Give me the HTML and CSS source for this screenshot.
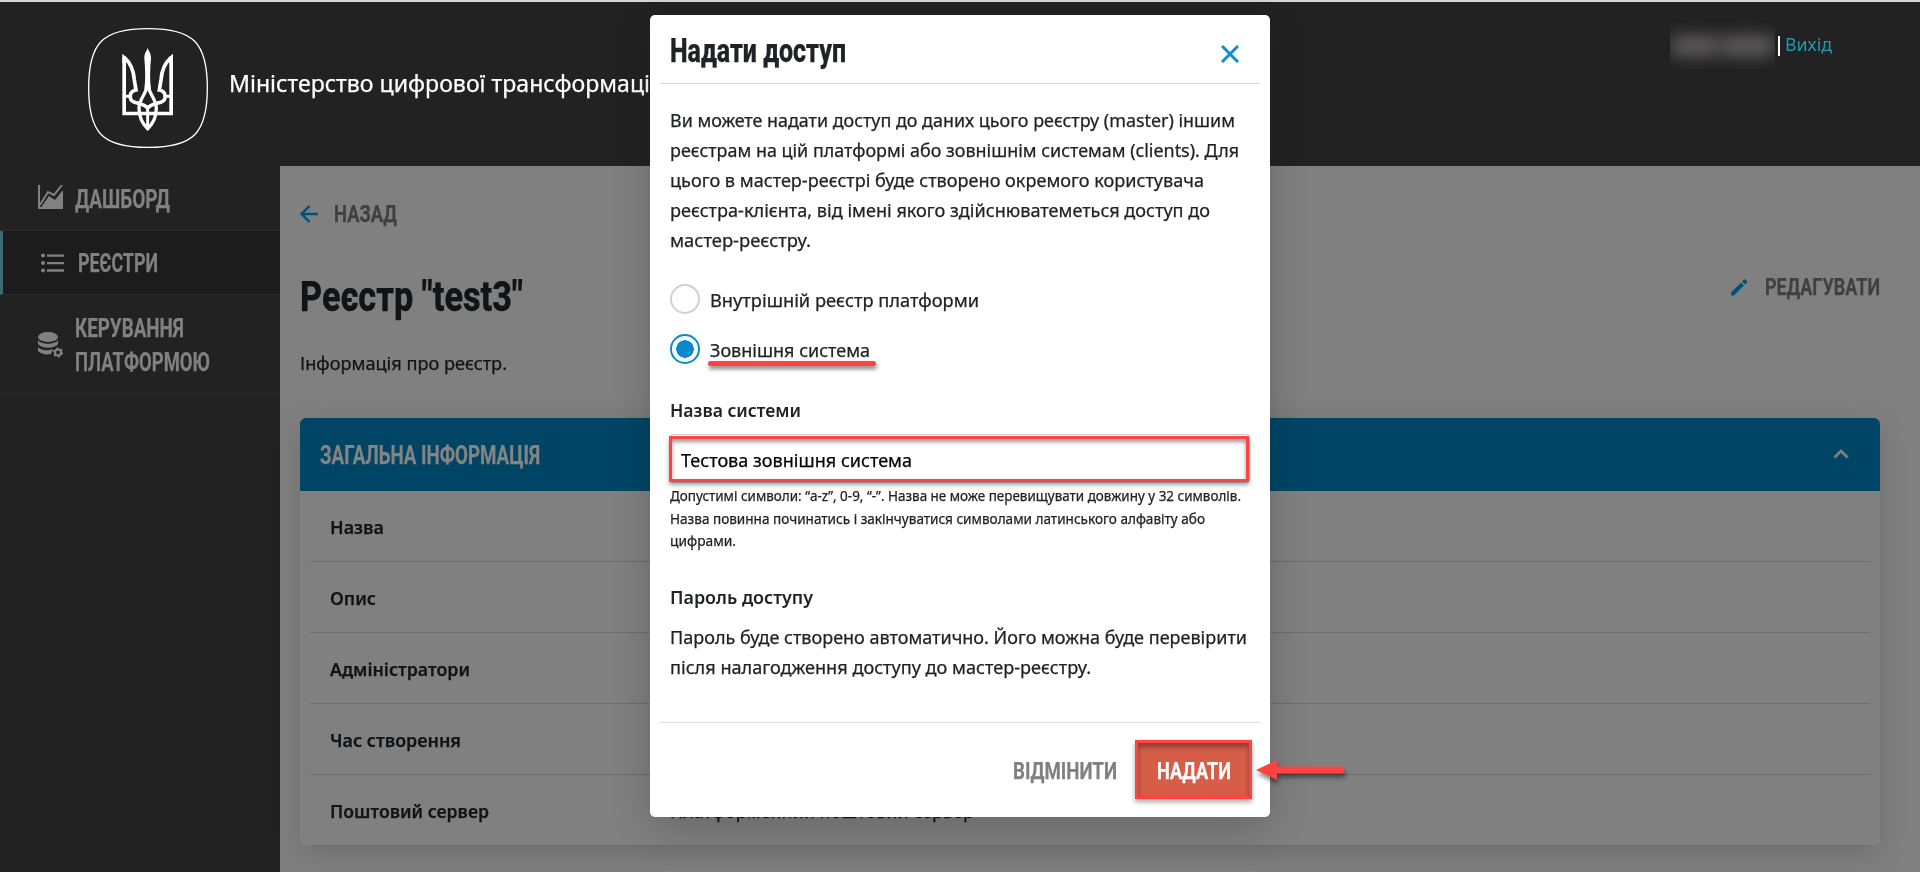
FILE: index.html
```html
<!DOCTYPE html>
<html lang="uk">
<head>
<meta charset="utf-8">
<title>Реєстр "test3"</title>
<link rel="stylesheet" href="styles.css">
</head>
<body>
<div class="page">
  <header class="header">
    <svg class="logo" viewBox="24 24 360 360" fill="none" stroke="#fff">
      <path stroke-width="4" d="M204 26C340 26 382 68 382 204S340 382 204 382S26 340 26 204S68 26 204 26Z"/>
      <g stroke-width="11">
        <path d="M132.500 112V280.500H273.500V112"/>
        <path d="M132 112C154 130 161 152 163 180L168 210C146 214 146 240 162 246C178 251 194 253 203 264C212 253 228 251 244 246C260 240 260 214 238 210L243 180C245 152 252 130 274 112"/>
        <path d="M132 229H152M254 229H274" stroke-width="9"/>
        <path d="M203 190C200 222 178 235 177 264C177 293 190 314 203 326C216 314 229 293 229 264C228 235 206 222 203 190" stroke-width="10"/>
        <path d="M203 262V326" stroke-width="9"/>
      </g>
      <path fill="#fff" stroke="none" d="M127 101L142 114L138 130H127ZM279 101L264 114L268 130H279ZM203 84C207 95 213 99 213 115C210 150 209 178 213 208H193C197 178 196 150 193 115C193 99 199 95 203 84Z"/>
    </svg>
    <div class="ministry"><span class="fit" data-w="421">Міністерство цифрової трансформаці</span></div>
    <div class="account"><span class="user"><i></i><i></i></span><span class="bar"></span><a class="logout"><span class="fit" data-w="47">Вихід</span></a></div>
  </header>
  <div class="layout">
    <nav class="sidebar">
      <a class="item"><svg width="25" height="24" viewBox="0 0 25 24"><path fill="none" stroke="#818181" stroke-width="2" d="M1 0V23M2 20L10 7L16 10L24 0"/><path fill="#818181" d="M2 24L11 11L17 15L25 5V24ZM0 22H25V24H0Z"/></svg><span class="fit" data-w="95">ДАШБОРД</span></a>
      <a class="item active"><svg width="23" height="20" viewBox="0 0 23 20" fill="#818181"><circle cx="2" cy="2.5" r="2"/><circle cx="2" cy="10" r="2"/><circle cx="2" cy="17.5" r="2"/><path d="M6 1.4h17v2.4H6zM6 8.9h17v2.4H6zM6 16.3h17v2.4H6z"/></svg><span class="fit" data-w="80">РЕЄСТРИ</span></a>
      <a class="item tall"><svg width="26" height="26" viewBox="0 0 26 26"><ellipse cx="10" cy="5" rx="10" ry="5" fill="#818181"/><path fill="#818181" d="M0 8C3 13 17 13 20 8V12C16 17 4 17 0 12ZM0 15C3 19 10 19 15 17L13 22C8 23 3 22 0 19Z"/><circle cx="20" cy="20.5" r="3" fill="none" stroke="#818181" stroke-width="2.2"/><circle cx="20" cy="20.5" r="4.2" fill="none" stroke="#818181" stroke-width="1.8" stroke-dasharray="2.2"/></svg><span class="lines"><span class="fit" data-w="109">КЕРУВАННЯ</span><span class="fit" data-w="135">ПЛАТФОРМОЮ</span></span></a>
    </nav>
    <main class="main">
      <a class="back"><svg width="18" height="18" viewBox="0 0 18 18"><path d="M18 9H2M9.500 1L1.500 9L9.500 17" fill="none" stroke="#00517a" stroke-width="2.4"/></svg><span class="fit" data-w="63">НАЗАД</span></a>
      <div class="heading"><h1><span class="fit" data-w="223">Реєстр "test3"</span></h1>
        <a class="edit"><svg width="17" height="17" viewBox="0 0 17 17" fill="#00517a"><path d="M0 13.500L10 3.500L13 6.500L3 16.500H0ZM11 2.500L13 .6Q13.800 0 14.500 .6L16 2.200Q16.600 3 16 3.600L14 5.600Z"/></svg><span class="fit" data-w="115">РЕДАГУВАТИ</span></a></div>
      <p class="info"><span class="fit" data-w="207">Інформація про реєстр.</span></p>
      <section class="card">
        <div class="card-head"><span class="fit" data-w="220">ЗАГАЛЬНА ІНФОРМАЦІЯ</span><svg width="16" height="10" viewBox="0 0 16 10"><path d="M1.500 8.500L8 2L14.500 8.500" fill="none" stroke="#808080" stroke-width="2.8"/></svg></div>
        <div class="row"><b><span class="fit" data-w="54">Назва</span></b></div>
        <div class="row"><b><span class="fit" data-w="46">Опис</span></b></div>
        <div class="row"><b><span class="fit" data-w="140">Адміністратори</span></b></div>
        <div class="row"><b><span class="fit" data-w="131">Час створення</span></b></div>
        <div class="row"><b><span class="fit" data-w="159">Поштовий сервер</span></b><span class="fit" data-w="304">Платформенний поштовий сервер</span></div>
      </section>
    </main>
  </div>
</div>

<div class="modal">
  <div class="modal-head"><h2><span class="fit" data-w="176">Надати доступ</span></h2>
    <svg width="18" height="18" viewBox="0 0 18 18"><path d="M1 1L17 17M17 1L1 17" stroke="#0f8fd2" stroke-width="3"/></svg></div>
  <div class="modal-body">
    <p class="lines"><span class="fit" data-w="565">Ви можете надати доступ до даних цього реєстру (master) іншим</span><span class="fit" data-w="569">реєстрам на цій платформі або зовнішнім системам (clients). Для</span><span class="fit" data-w="534">цього в мастер-реєстрі буде створено окремого користувача</span><span class="fit" data-w="540">реєстра-клієнта, від імені якого здійснюватеметься доступ до</span><span class="fit" data-w="141">мастер-реєстру.</span></p>
    <div class="radios">
      <label class="radio"><i></i><span class="fit" data-w="269">Внутрішній реєстр платформи</span></label>
      <label class="radio checked"><i></i><span class="fit" data-w="160">Зовнішня система</span><em class="underline"></em></label>
    </div>
    <div class="label first"><span class="fit" data-w="131">Назва системи</span></div>
    <div class="input"><span class="fit" data-w="231">Тестова зовнішня система</span><em class="input-mark"></em></div>
    <div class="hint lines"><span class="fit" data-w="571">Допустимі символи: “a-z”, 0-9, “-”. Назва не може перевищувати довжину у 32 символів.</span><span class="fit" data-w="535">Назва повинна починатись і закінчуватися символами латинського алфавіту або</span><span class="fit" data-w="66">цифрами.</span></div>
    <div class="label second"><span class="fit" data-w="143">Пароль доступу</span></div>
    <div class="lines note"><span class="fit" data-w="577">Пароль буде створено автоматично. Його можна буде перевірити</span><span class="fit" data-w="421">після налагодження доступу до мастер-реєстру.</span></div>
  </div>
  <div class="modal-foot"><a class="cancel"><span class="fit" data-w="104">ВІДМІНИТИ</span></a><a class="grant"><span class="fit" data-w="74">НАДАТИ</span></a></div>
  <svg class="arrow" width="92" height="24" viewBox="0 0 92 24"><path d="M20 12H85" stroke="#ff4343" stroke-width="7" stroke-linecap="round"/><path d="M0 12L21 2V22Z" fill="#ff4343"/></svg>
</div>
<script src="fit.js"></script>
</body>
</html>
```
FILE: styles.css
```css
* { box-sizing: border-box; }
body { margin: 0; background: #808080; color: #111315; font: 18.4px/30px "Noto Sans", "Open Sans", sans-serif; -webkit-text-stroke: .25px currentColor; overflow: hidden; }
h1, h2, p { margin: 0; }
.fit { display: inline-block; white-space: nowrap; transform-origin: 0 50%; }
.lines { display: flex; flex-direction: column; align-items: flex-start; }
svg { flex: none; display: block; }

.page { display: flex; flex-direction: column; height: 872px; border-top: 2px solid #d5d9da; overflow: hidden; }
.header { display: flex; align-items: flex-start; height: 164px; flex: none; background: #222; padding: 26px 87px 0 88px; }
.logo { width: 120px; height: 120px; }
.ministry { margin: 40px 0 0 21px; color: #fff; font-size: 23px; line-height: 30px; white-space: nowrap; }
.account { display: flex; margin-left: auto; margin-top: -6px; }
.user { display: flex; align-items: center; width: 105px; height: 47px; overflow: hidden; }
.user i { width: 55px; height: 18px; background: #696666; filter: blur(9px); border-radius: 6px; }
.user i:first-child { width: 50px; }
.bar { width: 2px; height: 20px; background: #fff; margin: 14px 5px 0 3px; }
.logout { color: #1a9bb0; margin: 7px 1px 0 0; -webkit-text-stroke: 0; }

.layout { display: flex; flex: 1; min-height: 0; }
.sidebar { width: 280px; flex: none; background: #222; color: #818181; font: 700 25.500px/34px Roboto, sans-serif; }
.item { display: flex; align-items: center; gap: 12px; height: 65px; padding: 2px 0 0 38px; border-bottom: 1px solid #2b2b2b; }
.item svg { margin-top: -4px; }
.item.active { height: 64px; padding-top: 0; background: #1c1c1c; border-left: 3px solid #3d6c70; gap: 14px; }
.item.active svg { margin-top: 0; }
.item.tall { height: 99px; gap: 11px; }
.item.tall svg { margin-top: 0; }

.main { flex: 1; padding: 33px 40px 0 20px; background: #808080; }
.back, .edit { display: flex; align-items: center; color: #404040; font: 700 24.500px/30px Roboto, sans-serif; }
.back { gap: 16px; }
.heading { display: flex; justify-content: space-between; margin-top: 43px; height: 50px; }
h1 { font: 800 43px/48px Roboto, sans-serif; }
.edit { gap: 17px; height: 30px; }
.info { margin-top: 26px; }
.card { margin-top: 40px; height: 428px; border-radius: 6px; box-shadow: 0 8px 30px rgba(0,0,0,.15); background: #808080; }
.card-head { display: flex; align-items: center; justify-content: space-between; height: 73px; padding: 2px 31px 0 20px; border-radius: 6px 6px 0 0; background: #004566; color: #848484; font: 700 25px/30px Roboto, sans-serif; }
.card-head svg { margin-top: -4px; }
.row { display: flex; align-items: center; height: 71px; margin: 0 10px; padding: 2px 20px 0; border-bottom: 1px solid #6e6e6e; }
.row b { width: 340px; font-weight: 600; }

.modal { position: absolute; left: 650px; top: 15px; width: 620px; height: 802px; border-radius: 5px; background: #fff; color: #202226; box-shadow: 0 10px 40px rgba(0,0,0,.2); }
.modal-head { display: flex; justify-content: space-between; height: 69px; margin: 0 10px; padding: 15px 21px 0 10px; border-bottom: 1px solid #dedede; }
h2 { font: 800 33px/42px Roboto, sans-serif; }
.modal-head svg { margin-top: 15px; }
.modal-body { padding: 21px 20px 0; }
.radios { display: flex; flex-direction: column; gap: 20px; margin-top: 29px; }
.radio { position: relative; display: flex; gap: 10px; height: 30px; line-height: 32px; }
.radio i { width: 30px; height: 30px; border: 2px solid #cfcfdc; border-radius: 50%; }
.radio.checked i { border-color: #088bce; background: radial-gradient(circle, #088bce 8.500px, #fff 9px); }
.underline { position: absolute; left: 38px; top: 27px; width: 168px; height: 5px; border-radius: 3px; background: #ff4343; box-shadow: 1px 3px 4px rgba(0,0,0,.5); }
.label { font-weight: 600; -webkit-text-stroke: 0; }
.label.first { margin-top: 31px; }
.label.second { margin-top: 29px; }
.input { position: relative; height: 49px; margin-top: 9px; padding: 10px 10px 0; border: 1px solid #c5cbd2; border-radius: 3px; color: #000; }
.input-mark { position: absolute; left: -2px; top: 1px; width: 580px; height: 46px; border: 3px solid #ff4343; box-shadow: 0 3px 4px rgba(0,0,0,.35), inset 0 3px 4px rgba(0,0,0,.4); }
.hint { margin-top: 2px; font-size: 13.800px; line-height: 22.500px; }
.note { margin-top: 10px; }
.modal-foot { display: flex; justify-content: flex-end; margin: 40px 10px 0; padding: 17px 8px 0 0; border-top: 1px solid #dcdce6; font: 700 24.800px/30px Roboto, sans-serif; }
.cancel { color: #808080; margin-top: 16px; }
.grant { margin-left: 18px; width: 117px; height: 59px; padding: 13px 0 0 19px; color: #fff; background: #d65d47; border: 3px solid #ff4343; box-shadow: 0 3px 5px rgba(0,0,0,.35), inset 0 4px 5px rgba(0,0,0,.35); }
.arrow { position: absolute; left: 606px; top: 743px; overflow: visible; filter: drop-shadow(1px 4px 2px rgba(0,0,0,.45)); }
```
FILE: fit.js
```js
// Condenses each label horizontally to its declared width.
document.querySelectorAll('.fit').forEach(function (el) {
  var natural = el.getBoundingClientRect().width;
  var target = Number(el.dataset.w);
  el.style.transform = 'scaleX(' + target / natural + ')';
  el.style.marginRight = (target - natural) + 'px';
});
```
